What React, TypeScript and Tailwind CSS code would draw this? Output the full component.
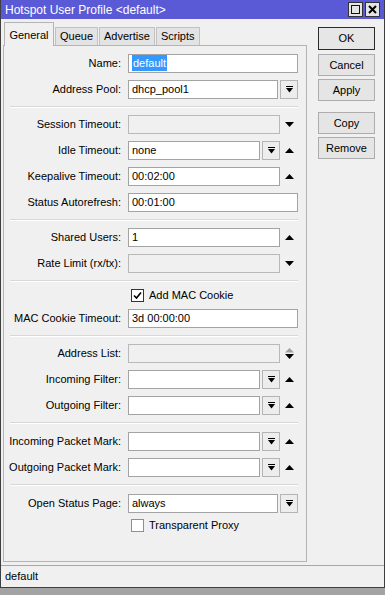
import type { ReactNode } from 'react';

const FONT = { fontFamily: '"Liberation Sans", Arial, sans-serif' };

/* ---------- small drawings ---------- */

function DropIcon() {
  return (
    <svg width="7" height="7" viewBox="0 0 7 7">
      <rect x="0" y="0" width="7" height="1" fill="#000" />
      <polygon points="0,2 7,2 3.5,6.5" fill="#000" />
    </svg>
  );
}

function UpArrow() {
  return (
    <svg width="9" height="5" viewBox="0 0 9 5">
      <polygon points="4.5,0 9,5 0,5" fill="#000" />
    </svg>
  );
}

function DownArrow() {
  return (
    <svg width="9" height="5" viewBox="0 0 9 5">
      <polygon points="0,0 9,0 4.5,5" fill="#000" />
    </svg>
  );
}

function UpDownArrow() {
  return (
    <svg width="9" height="11" viewBox="0 0 9 11">
      <polygon points="4.5,0 9,4.5 0,4.5" fill="#a0a0a0" />
      <polygon points="0,6 9,6 4.5,11" fill="#000" />
    </svg>
  );
}

/* ---------- form pieces ---------- */

function Input({ value, width, disabled, selected }: { value?: string; width: string; disabled?: boolean; selected?: boolean }) {
  return (
    <div
      className={
        'flex h-[19px] items-center border px-[3px] text-[11px] ' +
        width +
        (disabled ? ' border-[#b9b9b9] bg-[#f0f0f0]' : ' border-[#a3a3a3] bg-white')
      }
    >
      {selected ? <span className="bg-[#3399ff] px-px text-white">{value}</span> : <span className="text-black">{value}</span>}
    </div>
  );
}

function DropBtn() {
  return (
    <div className="ml-[2px] flex h-[19px] w-[18px] items-center justify-center border border-[#b4b4b4] bg-[#ededed]">
      <DropIcon />
    </div>
  );
}

function ArrowZone({ children }: { children?: ReactNode }) {
  return <div className="flex h-[19px] w-[18px] items-center justify-center">{children}</div>;
}

function Row({ label, children, h = 'h-[26px]' }: { label?: string; children: ReactNode; h?: string }) {
  return (
    <div className={'flex items-center ' + h}>
      <div className="w-[117px] text-right text-[11px] text-black">{label}</div>
      <div className="ml-[7px] flex w-[170px] items-center">{children}</div>
    </div>
  );
}

function Sep({ h = 'h-[9px]' }: { h?: string }) {
  return (
    <div className={'flex items-center ' + h}>
      <div className="ml-[6px] w-[288px] border-t border-b border-t-[#d8d8d8] border-b-white" />
    </div>
  );
}

function Check({ label, checked }: { label: string; checked?: boolean }) {
  return (
    <div className="flex items-center gap-[5px]">
      <div
        className={
          'flex h-[13px] w-[13px] items-center justify-center border bg-white ' +
          (checked ? 'border-[#333]' : 'border-[#8e8f8f]')
        }
      >
        {checked && (
          <svg width="9" height="9" viewBox="0 0 9 9">
            <path d="M1 4.5 L3.5 7 L8 1.5" fill="none" stroke="#000" strokeWidth="1.6" />
          </svg>
        )}
      </div>
      <span className="text-[11px] text-black">{label}</span>
    </div>
  );
}

function Btn({ label, primary }: { label: string; primary?: boolean }) {
  return (
    <div
      className={
        'flex w-[57px] items-center justify-center border text-[11px] text-black ' +
        (primary ? 'h-[23px] border-[#2b2b2b] bg-[#e6e6e6]' : 'h-[22px] border-[#adadad] bg-[#e5e5e5]')
      }
    >
      {label}
    </div>
  );
}

/* ---------- window ---------- */

export default function App() {
  const tabs = ['Queue', 'Advertise', 'Scripts'];

  return (
    <div className="h-[595px] w-[385px] bg-[#a3a3a3]" style={FONT}>
      <div className="flex h-[588px] w-[385px] flex-col border-x border-b border-[#3f3f3f] bg-[#f0f0f0]">
        {/* title bar */}
        <div className="flex h-[19px] items-center justify-between bg-[#5a5ad6] pl-[4px] pr-[4px]">
          <span className="text-[12px] text-white">Hotspot User Profile &lt;default&gt;</span>
          <div className="flex gap-[2px]">
            <div className="flex h-[15px] w-[15px] items-center justify-center border border-[#333] bg-[#e4e4e4]">
              <div className="h-[9px] w-[9px] border border-[#111]" />
            </div>
            <div className="flex h-[15px] w-[15px] items-center justify-center border border-[#333] bg-[#e4e4e4]">
              <svg width="9" height="9" viewBox="0 0 9 9">
                <path d="M1 1 L8 8 M8 1 L1 8" stroke="#000" strokeWidth="2" />
              </svg>
            </div>
          </div>
        </div>

        {/* body */}
        <div className="flex h-[546px]">
          <div className="flex w-[306px] flex-col pl-[2px]">
            {/* tabs */}
            <div className="relative z-10 flex h-[26px] items-end pl-[1px]">
              <div className="-mb-px flex h-[24px] w-[50px] items-start justify-center border border-b-0 border-[#b4b4b4] bg-[#f0f0f0] pt-[4px] text-[11px] text-black">
                General
              </div>
              {tabs.map((t) => (
                <div
                  key={t}
                  className="ml-[1px] flex h-[18px] items-center border border-b-0 border-[#c2c2c2] bg-[#e3e3e3] px-[4px] text-[11px] text-black"
                >
                  {t}
                </div>
              ))}
            </div>

            {/* panel */}
            <div className="flex h-[517px] w-[304px] flex-col border border-[#b4b4b4] pt-[4px]">
              <Row label="Name:">
                <Input value="default" width="w-[170px]" selected />
              </Row>
              <Row label="Address Pool:">
                <Input value="dhcp_pool1" width="w-[150px]" />
                <DropBtn />
              </Row>
              <Sep />
              <Row label="Session Timeout:">
                <Input width="w-[152px]" disabled />
                <ArrowZone>
                  <DownArrow />
                </ArrowZone>
              </Row>
              <Row label="Idle Timeout:">
                <Input value="none" width="w-[132px]" />
                <DropBtn />
                <ArrowZone>
                  <UpArrow />
                </ArrowZone>
              </Row>
              <Row label="Keepalive Timeout:">
                <Input value="00:02:00" width="w-[152px]" />
                <ArrowZone>
                  <UpArrow />
                </ArrowZone>
              </Row>
              <Row label="Status Autorefresh:">
                <Input value="00:01:00" width="w-[170px]" />
              </Row>
              <Sep />
              <Row label="Shared Users:">
                <Input value="1" width="w-[152px]" />
                <ArrowZone>
                  <UpArrow />
                </ArrowZone>
              </Row>
              <Row label="Rate Limit (rx/tx):">
                <Input width="w-[152px]" disabled />
                <ArrowZone>
                  <DownArrow />
                </ArrowZone>
              </Row>
              <Sep />
              <Row h="h-[20px]">
                <div className="pl-[3px]">
                  <Check label="Add MAC Cookie" checked />
                </div>
              </Row>
              <Row label="MAC Cookie Timeout:">
                <Input value="3d 00:00:00" width="w-[170px]" />
              </Row>
              <Sep />
              <Row label="Address List:">
                <Input width="w-[152px]" disabled />
                <ArrowZone>
                  <UpDownArrow />
                </ArrowZone>
              </Row>
              <Row label="Incoming Filter:">
                <Input width="w-[132px]" />
                <DropBtn />
                <ArrowZone>
                  <UpArrow />
                </ArrowZone>
              </Row>
              <Row label="Outgoing Filter:">
                <Input width="w-[132px]" />
                <DropBtn />
                <ArrowZone>
                  <UpArrow />
                </ArrowZone>
              </Row>
              <Sep h="h-[10px]" />
              <Row label="Incoming Packet Mark:">
                <Input width="w-[132px]" />
                <DropBtn />
                <ArrowZone>
                  <UpArrow />
                </ArrowZone>
              </Row>
              <Row label="Outgoing Packet Mark:">
                <Input width="w-[132px]" />
                <DropBtn />
                <ArrowZone>
                  <UpArrow />
                </ArrowZone>
              </Row>
              <Sep h="h-[10px]" />
              <Row label="Open Status Page:">
                <Input value="always" width="w-[150px]" />
                <DropBtn />
              </Row>
              <Row h="h-[18px]">
                <div className="pl-[3px]">
                  <Check label="Transparent Proxy" />
                </div>
              </Row>
            </div>
          </div>

          {/* right buttons */}
          <div className="ml-[11px] flex flex-col pt-[8px]">
            <Btn label="OK" primary />
            <div className="h-[4px]" />
            <Btn label="Cancel" />
            <div className="h-[3px]" />
            <Btn label="Apply" />
            <div className="h-[11px]" />
            <Btn label="Copy" />
            <div className="h-[3px]" />
            <Btn label="Remove" />
          </div>
        </div>

        {/* status bar */}
        <div className="flex h-[22px] items-center border-t border-[#a8a8a8] pl-[4px] text-[11px] text-black">default</div>
      </div>
    </div>
  );
}
